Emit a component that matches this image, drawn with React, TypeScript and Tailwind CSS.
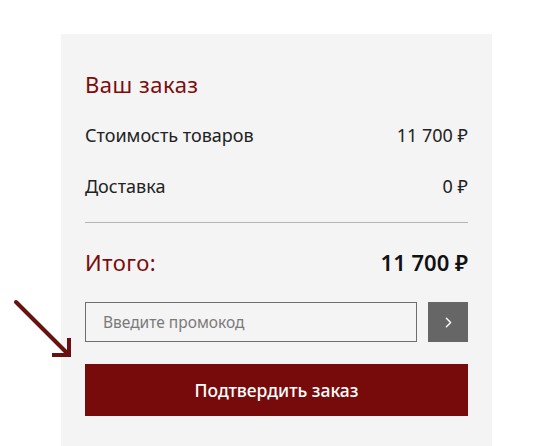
import { ChevronRight } from "lucide-react"

function Arrow() {
  return (
    <svg className="absolute left-[12px] top-[298px]" width="62" height="62" viewBox="0 0 62 62" fill="none">
      <path d="M4 4 L55 55" stroke="#6b1010" strokeWidth="4" strokeLinecap="round" />
      <path d="M57 42 L57 57 L42 57" stroke="#6b1010" strokeWidth="4" strokeLinecap="square" />
    </svg>
  )
}

export default function App() {
  return (
    <main className="relative h-[446px] w-[553px] overflow-hidden bg-white font-['Noto_Sans',sans-serif]">
      <Arrow />
      <div className="ml-[61px] mt-[34px] h-[420px] w-[431px] bg-[#f4f4f4] px-[24px] pt-[36px]">
        <h2 className="text-[22px] leading-[28px] tracking-[0.5px] text-[#7b0c0c]">Ваш заказ</h2>
        <div className="mt-[25px] flex justify-between text-[18px] leading-[24px] text-[#222]">
          <span>Стоимость товаров</span>
          <span>11 700 ₽</span>
        </div>
        <div className="mt-[27px] flex justify-between text-[18px] leading-[24px] text-[#222]">
          <span>Доставка</span>
          <span>0 ₽</span>
        </div>
        <div className="mt-[24px] h-px bg-[#b5b5b5]" />
        <div className="mt-[25px] flex items-center justify-between leading-[28px]">
          <span className="text-[22px] tracking-[0.5px] text-[#7b0c0c]">Итого:</span>
          <span className="text-[22px] font-semibold text-[#111]">11 700 ₽</span>
        </div>
        <div className="mt-[26px] flex gap-[11px]">
          <input
            placeholder="Введите промокод"
            className="h-[40px] flex-1 border border-[#6e6e6e] bg-[#f4f4f4] px-[17px] text-[15.5px] text-[#222] outline-none placeholder:text-[#7a7a7a]"
          />
          <button className="flex h-[40px] w-[40px] items-center justify-center bg-[#666666] text-white">
            <ChevronRight size={17} strokeWidth={2} />
          </button>
        </div>
        <button className="mt-[22px] h-[52px] w-full bg-[#770b0b] text-[17.5px] font-medium text-white">
          Подтвердить заказ
        </button>
      </div>
    </main>
  )
}
